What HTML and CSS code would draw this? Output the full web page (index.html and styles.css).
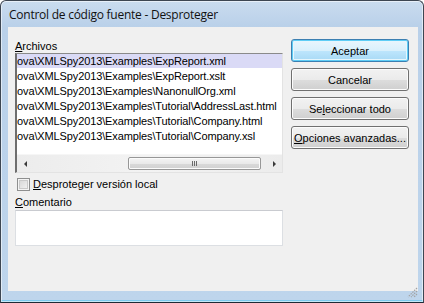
FILE: index.html
```html
<!DOCTYPE html>
<html>
<head>
  <meta charset="utf-8">
  <title>Control de código fuente - Desproteger</title>
  <link rel="stylesheet" href="styles.css">
</head>
<body>
  <div class="window">
    <div class="titlebar">Control de código fuente - Desproteger</div>
    <div class="client">
      <div class="main">
        <div class="label"><u>A</u>rchivos</div>
        <div class="listbox">
          <ul class="files">
            <li class="sel">ova\XMLSpy2013\Examples\ExpReport.xml</li>
            <li>ova\XMLSpy2013\Examples\ExpReport.xslt</li>
            <li>ova\XMLSpy2013\Examples\NanonullOrg.xml</li>
            <li>ova\XMLSpy2013\Examples\Tutorial\AddressLast.html</li>
            <li>ova\XMLSpy2013\Examples\Tutorial\Company.html</li>
            <li>ova\XMLSpy2013\Examples\Tutorial\Company.xsl</li>
          </ul>
          <div class="hscroll">
            <span class="sbtn"><span class="arrow-left"></span></span>
            <div class="track">
              <div class="thumb"><span class="grip-lines"></span></div>
            </div>
            <span class="sbtn"><span class="arrow-right"></span></span>
          </div>
        </div>
        <div class="check"><span class="box"></span><span><u>D</u>esproteger versión local</span></div>
        <div class="label"><u>C</u>omentario</div>
        <div class="comment"></div>
      </div>
      <div class="buttons">
        <button class="btn default">Aceptar</button>
        <button class="btn">Cancelar</button>
        <button class="btn">Se<u>l</u>eccionar todo</button>
        <button class="btn"><u>O</u>pciones avanzadas...</button>
      </div>
    </div>
    <svg class="resize" width="11" height="11" viewBox="0 0 11 11">
      <path d="M10 1 L1 10 M10 4 L4 10 M10 7 L7 10" stroke="#a3a3a3" stroke-width="1.2" stroke-dasharray="1.5 1"/>
    </svg>
  </div>
</body>
</html>
```

FILE: styles.css
```css
html, body {
  margin: 0;
  padding: 0;
  background: #fff;
}

/* Window frame */
.window {
  position: relative;
  box-sizing: border-box;
  width: 424px;
  height: 303px;
  display: flex;
  flex-direction: column;
  border: 1px solid #3d4652;
  border-bottom-color: #1d2a36;
  border-radius: 6px 6px 0 0;
  background: linear-gradient(#cadcef, #b9d0e9 26px, #bed5ec);
  box-shadow: inset 0 0 0 1px rgba(255, 255, 255, .55), inset 0 -2px 0 #7cc9ee;
}

.titlebar {
  height: 26px;
  box-sizing: border-box;
  padding: 3px 0 0 8px;
  line-height: 22px;
  font-family: "Open Sans", sans-serif;
  font-size: 12px;
  letter-spacing: -0.25px;
  color: #111;
}

.client {
  flex: 1;
  display: flex;
  gap: 8px;
  margin: 0 5px 11px 7px;
  padding: 12px 9px 0 7px;
  background: #f0f0f0;
  font-family: "Liberation Sans", Arial, sans-serif;
  font-size: 11px;
  color: #000;
}

.main {
  width: 268px;
  display: flex;
  flex-direction: column;
}

.label {
  height: 13px;
  line-height: 13px;
  margin-top: 1px;
}

/* File list */
.listbox {
  box-sizing: border-box;
  height: 120px;
  display: flex;
  flex-direction: column;
  background: #fff;
  border-top: 1px solid #8a8a8a;
  border-left: 2px solid #6e6e6e;
  border-right: 1px solid #e3e3e3;
  border-bottom: 1px solid #e3e3e3;
}

.files {
  flex: 1;
  list-style: none;
  margin: 0;
  padding: 0;
  overflow: hidden;
  white-space: nowrap;
  letter-spacing: -0.12px;
}

.files li {
  height: 15px;
  line-height: 14px;
}

.files li.sel {
  background: #dadaf6;
  height: 14px;
  margin-bottom: 1px;
}

.hscroll {
  height: 17px;
  display: flex;
  background: linear-gradient(90deg, #ececec, #f3f3f3 50%, #ececec);
  border-top: 1px solid #f6f6f6;
}

.sbtn {
  width: 17px;
  display: flex;
  align-items: center;
  justify-content: center;
}

.arrow-left {
  width: 0;
  height: 0;
  border-top: 3px solid transparent;
  border-bottom: 3px solid transparent;
  border-right: 3px solid #3a3a3a;
  margin-left: -1px;
}

.arrow-right {
  width: 0;
  height: 0;
  border-top: 3px solid transparent;
  border-bottom: 3px solid transparent;
  border-left: 3px solid #3a3a3a;
  margin-left: 1px;
}

.track {
  flex: 1;
  display: flex;
  align-items: center;
}

.thumb {
  box-sizing: border-box;
  width: 133px;
  height: 13px;
  margin-left: auto;
  margin-right: 4px;
  border: 1px solid #979797;
  border-radius: 2px;
  background: linear-gradient(#f4f4f4, #e9e9e9 50%, #d9d9d9 51%, #d0d0d0);
  box-shadow: inset 0 0 0 1px #fbfbfb;
  display: flex;
  align-items: center;
  justify-content: center;
}

.grip-lines {
  width: 5px;
  height: 5px;
  background: repeating-linear-gradient(90deg, #6a6a6a 0 1px, transparent 1px 2px);
}

/* Checkbox */
.check {
  display: flex;
  align-items: center;
  gap: 3px;
  height: 13px;
  line-height: 13px;
  margin: 5px 0 4px 2px;
}

.box {
  box-sizing: border-box;
  width: 13px;
  height: 13px;
  border: 1px solid #8e8f8f;
  background: linear-gradient(135deg, #d2d2d2, #f6f6f6);
  box-shadow: inset 0 0 0 1px #f4f4f4, inset 0 0 0 2px #c9c9c9;
}

.comment {
  box-sizing: border-box;
  height: 36px;
  margin-top: 1px;
  background: #fff;
  border: 1px solid #dcdfe3;
  border-top-color: #c9cbd0;
}

/* Buttons */
.buttons {
  width: 118px;
  display: flex;
  flex-direction: column;
  gap: 6px;
}

.btn {
  box-sizing: border-box;
  height: 23px;
  padding: 0;
  border: 1px solid #707070;
  border-radius: 3px;
  background: linear-gradient(#f2f2f2, #ebebeb 50%, #dddddd 51%, #cfcfcf);
  box-shadow: inset 0 0 0 1px #fcfcfc;
  font-family: "Liberation Sans", Arial, sans-serif;
  font-size: 11px;
  color: #000;
}

.btn.default {
  border-color: #3c7fb1;
  background: linear-gradient(#eaf6fd, #d9f0fc 50%, #bee6fd 51%, #a7d9f5);
  box-shadow: inset 0 0 0 1px #5ecdf6, inset 0 0 0 2px #e6f6fd;
}

.resize {
  position: absolute;
  right: 5px;
  bottom: 4px;
}
```
